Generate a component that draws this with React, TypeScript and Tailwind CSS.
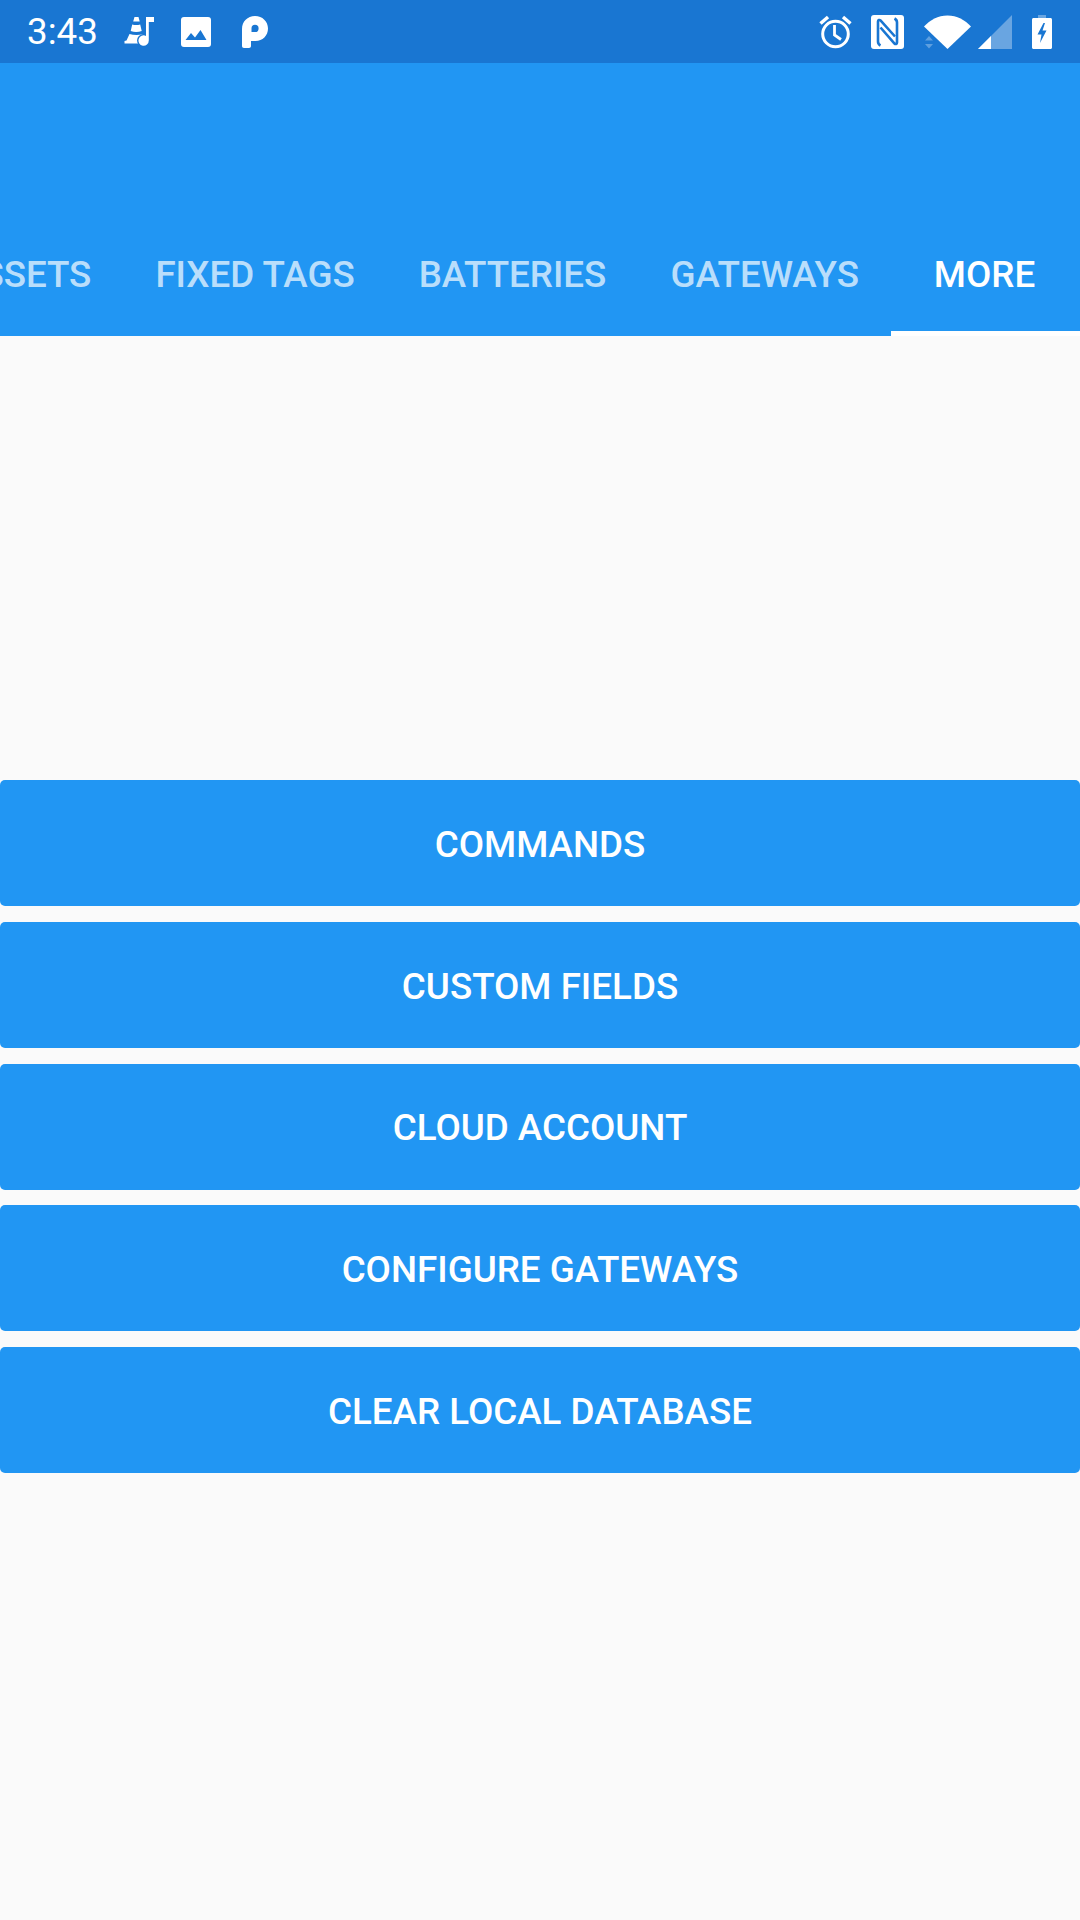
import React from "react";

const font = { fontFamily: "Roboto, sans-serif" };

function VlcIcon() {
  return (
    <svg width="30" height="30" viewBox="0 0 30 30" className="shrink-0">
      <path d="M10.500 0h4l1.200 4.500H9.200z" fill="#fff" />
      <path d="M8.200 7.500c2.500.8 5.500.8 8 0l1.500 6.500c-3.500 1.300-7.500 1.300-11 0z" fill="#fff" />
      <path d="M5.500 17c4 1.300 9.500 1.300 13 .3l1 9.200H0.500v-2.500l2-.5z" fill="#fff" />
      <circle cx="19.500" cy="23.500" r="6.500" fill="#1976D2" />
      <path d="M22 0h8v5h-5.200v18.500a5.200 5.200 0 1 1-2.800-4.600z" fill="#fff" />
    </svg>
  );
}
function ImageIcon() {
  return (
    <svg width="30" height="30" viewBox="0 0 30 30" className="shrink-0">
      <rect x="0" y="0" width="30" height="30" rx="3" fill="#fff" />
      <path d="M4.500 23l5.500-7 4 4.500 5.500-7.500 6 10z" fill="#1976D2" />
    </svg>
  );
}
function PIcon() {
  return (
    <svg width="26" height="32" viewBox="0 0 26 32" className="shrink-0">
      <path
        fillRule="evenodd"
        d="M0 13C0 5.500 5.500 0 13 0s13 5.500 13 12.500S20.500 25 13.500 25H9v5c0 1.200-.8 2-2 2H2c-1.200 0-2-.8-2-2zM13 8.800a3.500 3.500 0 0 0-3.500 3.500V16h3.500a3.600 3.600 0 0 0 0-7.200z"
        fill="#fff"
      />
    </svg>
  );
}
function AlarmIcon() {
  return (
    <svg width="33" height="34" viewBox="0 0 33 34" className="shrink-0" fill="none">
      <circle cx="16.500" cy="19" r="12.800" stroke="#fff" strokeWidth="3" />
      <path d="M15.500 10v10l6.500 4.500" stroke="#fff" strokeWidth="2.800" />
      <path d="M1.500 8.500L9 2" stroke="#fff" strokeWidth="3.400" />
      <path d="M31.500 8.500L24 2" stroke="#fff" strokeWidth="3.400" />
    </svg>
  );
}
function NfcIcon() {
  return (
    <svg width="33" height="34" viewBox="0 0 33 34" className="shrink-0" fill="none">
      <rect width="33" height="34" rx="3" fill="#fff" />
      <path d="M9.500 30.500C7.500 29.500 7 28.500 7 26.500V6.500c0-1.500 1.500-2 2.500-1l14.500 16" stroke="#1976D2" strokeWidth="2.600" />
      <path d="M23.500 3.500c2 1 2.500 2 2.500 4v20c0 1.500-1.500 2-2.500 1L9.500 12.500" stroke="#1976D2" strokeWidth="2.600" />
    </svg>
  );
}
function WifiIcon() {
  return (
    <svg width="47" height="34" viewBox="0 0 47 34" className="shrink-0">
      <path d="M0 11.500C6 5 14 .5 23.500.5S41 5 47 11.500L23.500 34z" fill="#fff" />
      <path d="M1 25.500l4-4.500 4 4.500zM1 29h8l-4 4.500z" fill="#fff" fillOpacity="0.3" />
    </svg>
  );
}
function SignalIcon() {
  return (
    <svg width="34" height="34" viewBox="0 0 34 34" className="shrink-0">
      <path d="M34 0v34H0z" fill="#fff" fillOpacity="0.35" />
      <path d="M13 21v13H0z" fill="#fff" />
    </svg>
  );
}
function BatteryIcon() {
  return (
    <svg width="20" height="34" viewBox="0 0 20 34" className="shrink-0">
      <path d="M6 0h8v3h-8z" fill="#fff" fillOpacity="0.35" />
      <path d="M1.500 3h17c.8 0 1.500.7 1.500 1.500V32.500c0 .8-.7 1.500-1.500 1.500h-17C.7 34 0 33.300 0 32.500V4.500C0 3.700.7 3 1.500 3z" fill="#fff" />
      <path d="M11.500 8L5.500 19.500h4L8 28l6.500-12.500h-4L13 8z" fill="#1976D2" />
    </svg>
  );
}

const tabs = ["ASSETS", "FIXED TAGS", "BATTERIES", "GATEWAYS"];
const buttons = ["COMMANDS", "CUSTOM FIELDS", "CLOUD ACCOUNT", "CONFIGURE GATEWAYS", "CLEAR LOCAL DATABASE"];

export default function App() {
  return (
    <div className="flex flex-col w-[1080px] h-[1920px] bg-[#fafafa] overflow-hidden" style={font}>
      <div className="flex items-center justify-between h-[63px] bg-[#1976D2] pl-[27px] pr-[28px] shrink-0">
        <div className="flex items-center">
          <span className="text-[36.75px] leading-none text-white mr-[26px] pt-[2px]">3:43</span>
          <div className="mr-[27px]"><VlcIcon /></div>
          <div className="mr-[31px]"><ImageIcon /></div>
          <PIcon />
        </div>
        <div className="flex items-center">
          <div className="mr-[19px]"><AlarmIcon /></div>
          <div className="mr-[20px]"><NfcIcon /></div>
          <div className="mr-[7px]"><WifiIcon /></div>
          <div className="mr-[20px]"><SignalIcon /></div>
          <BatteryIcon />
        </div>
      </div>

      <div className="flex flex-col justify-end h-[273px] bg-[#2196F3] shrink-0">
        <div className="flex justify-end h-[106px] overflow-hidden">
          {tabs.map((t) => (
            <div key={t} className="flex items-center justify-center shrink-0 px-[32px] pb-[17px] text-[36.75px] font-medium text-white/70 whitespace-nowrap">
              {t}
            </div>
          ))}
          <div className="flex items-center justify-center shrink-0 w-[189px] pb-[12px] pr-[2px] text-[36.75px] font-medium text-white whitespace-nowrap border-b-[5px] border-white">
            MORE
          </div>
        </div>
      </div>

      <div className="flex flex-col gap-[15.75px] pt-[444px]">
        {buttons.map((b) => (
          <div key={b} className="flex items-center justify-center h-[126px] pt-[3px] rounded-[5px] bg-[#2196F3] text-[36.75px] font-medium text-white">
            {b}
          </div>
        ))}
      </div>
    </div>
  );
}
